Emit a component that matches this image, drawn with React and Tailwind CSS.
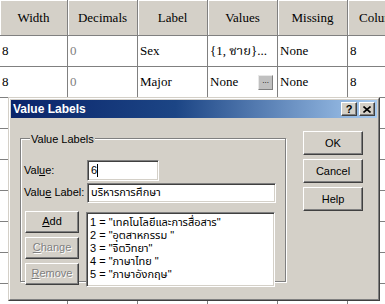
import React from 'react';

const cols = [
  { w: 'w-[68px]', title: 'Width' },
  { w: 'w-[70px]', title: 'Decimals' },
  { w: 'w-[70px]', title: 'Label' },
  { w: 'w-[70px]', title: 'Values' },
  { w: 'w-[70px]', title: 'Missing' },
  { w: 'w-[70px]', title: 'Columns' },
];

const rows = [
  ['8', '0', 'Sex', '{1, ชาย}...', 'None', '8'],
  ['8', '0', 'Major', 'None', 'None', '8'],
  [], [], [], [], [], [], [],
];

const labels = [
  '1 = "เทคโนโลยีและการสื่อสาร"',
  '2 = "อุตสาหกรรม "',
  '3 = "จิตวิทยา"',
  '4 = "ภาษาไทย "',
  '5 = "ภาษาอังกฤษ"',
];

const serif = "[font-family:'Liberation_Serif','Noto_Serif_Thai','Noto_Sans_Thai',serif]";
const sans = "[font-family:'Liberation_Sans','Noto_Sans_Thai',sans-serif]";

const raised =
  'border border-t-white border-l-white border-r-[#404040] border-b-[#404040] shadow-[inset_-1px_-1px_0_#808080] bg-[#d4d0c8]';
const sunken =
  'border border-t-[#808080] border-l-[#808080] border-r-white border-b-white shadow-[inset_1px_1px_0_#404040,inset_-1px_-1px_0_#d4d0c8] bg-white';

const Button = ({ children, disabled, className = '' }) => (
  <div
    className={`${raised} flex items-center justify-center text-[11px] ${
      disabled ? 'text-[#808080] [text-shadow:1px_1px_0_#fff]' : 'text-black'
    } ${className}`}
  >
    {children}
  </div>
);

const Grid = () => (
  <div className={`${serif} text-[13px] text-black`}>
    <div className="flex h-[36px] bg-[#d4d0c8] border-b border-[#808080]">
      {cols.map((c) => (
        <div
          key={c.title}
          className={`${c.w} shrink-0 flex items-center justify-center border-r border-[#808080] shadow-[inset_1px_1px_0_#fff] whitespace-nowrap overflow-hidden`}
        >
          {c.title}
        </div>
      ))}
    </div>
    {rows.map((r, i) => (
      <div key={i} className="flex h-[31px] border-b border-[#808080] bg-white">
        {cols.map((c, j) => (
          <div
            key={j}
            className={`${c.w} shrink-0 flex items-center justify-between pl-[2px] pr-[4px] border-r border-[#808080] whitespace-nowrap overflow-hidden ${
              j === 1 ? 'text-[#808080]' : ''
            }`}
          >
            <span>{r[j] || ''}</span>
            {i === 1 && j === 3 && (
              <span className="w-[15px] h-[15px] bg-[#c0c0c0] border border-t-[#e8e8e8] border-l-[#e8e8e8] border-r-[#808080] border-b-[#808080] flex items-center justify-center text-[9px] leading-none pb-[3px]">
                ...
              </span>
            )}
          </div>
        ))}
      </div>
    ))}
  </div>
);

const Dialog = () => (
  <div className="absolute left-[8px] top-[97px] w-[372px] h-[204px] border border-t-[#d4d0c8] border-l-[#d4d0c8] border-r-[#404040] border-b-[#404040]">
    <div className={`h-full border border-t-white border-l-white border-r-[#808080] border-b-[#808080] bg-[#d4d0c8] p-px ${sans}`}>
      <div className="h-[18px] flex items-center pl-[2px] pr-[2px] bg-[linear-gradient(to_right,#0a246a_0%,#1c4585_45%,#a6caf0_100%)]">
        <span className="flex-1 text-white font-bold text-[12px] leading-none">Value Labels</span>
        <div className="flex gap-[2px]">
          <Button className="w-[16px] h-[14px] font-bold text-[11px] leading-none">?</Button>
          <Button className="w-[16px] h-[14px]">
            <svg width="8" height="7" viewBox="0 0 8 7">
              <path d="M0.5 0.5 L7.5 6.5 M7.5 0.5 L0.5 6.5" stroke="black" strokeWidth="1.6" />
            </svg>
          </Button>
        </div>
      </div>

      <div className="flex items-start pl-[9px] pt-[13px] text-[11px] text-black">
        <div className="mt-[7px] w-[266px] h-[144px] border border-[#808080] shadow-[inset_1px_1px_0_#fff,1px_1px_0_#fff]">
          <span className="inline-block -mt-[7px] ml-[9px] px-[1px] bg-[#d4d0c8] leading-[14px] align-top">
            Value Labels
          </span>

          <div className="flex items-center pl-[3px] mt-[4px]">
            <span className="w-[63px]">
              Val<u>u</u>e:
            </span>
            <div className={`${sunken} w-[72px] h-[21px] flex items-center pl-[3px]`}>
              <span>6</span>
              <span className="inline-block w-px h-[13px] bg-black" />
            </div>
          </div>

          <div className="flex items-center pl-[3px] mt-[2px]">
            <span className="w-[63px]">
              Valu<u>e</u> Label:
            </span>
            <div className={`${sunken} w-[189px] h-[20px] flex items-center pl-[3px] whitespace-nowrap`}>
              บริหารการศึกษา
            </div>
          </div>

          <div className="flex items-start pl-[4px] mt-[8px]">
            <div className="flex flex-col gap-[4px] w-[54px]">
              <Button className="h-[22px]">
                <u>A</u>dd
              </Button>
              <Button disabled className="h-[22px]">
                <u>C</u>hange
              </Button>
              <Button disabled className="h-[22px]">
                <u>R</u>emove
              </Button>
            </div>
            <div className={`${sunken} ml-[7px] mt-px w-[189px] h-[75px] pl-[3px] pt-[3px] overflow-hidden`}>
              {labels.map((l) => (
                <div key={l} className="leading-[13px] whitespace-nowrap">
                  {l}
                </div>
              ))}
            </div>
          </div>
        </div>

        <div className="ml-[17px] flex flex-col gap-[4px] w-[60px]">
          <Button className="h-[24px]">OK</Button>
          <Button className="h-[24px]">Cancel</Button>
          <Button className="h-[24px]">Help</Button>
        </div>
      </div>
    </div>
  </div>
);

export default function App() {
  return (
    <div className="relative w-[385px] h-[304px] overflow-hidden bg-white">
      <Grid />
      <Dialog />
    </div>
  );
}
